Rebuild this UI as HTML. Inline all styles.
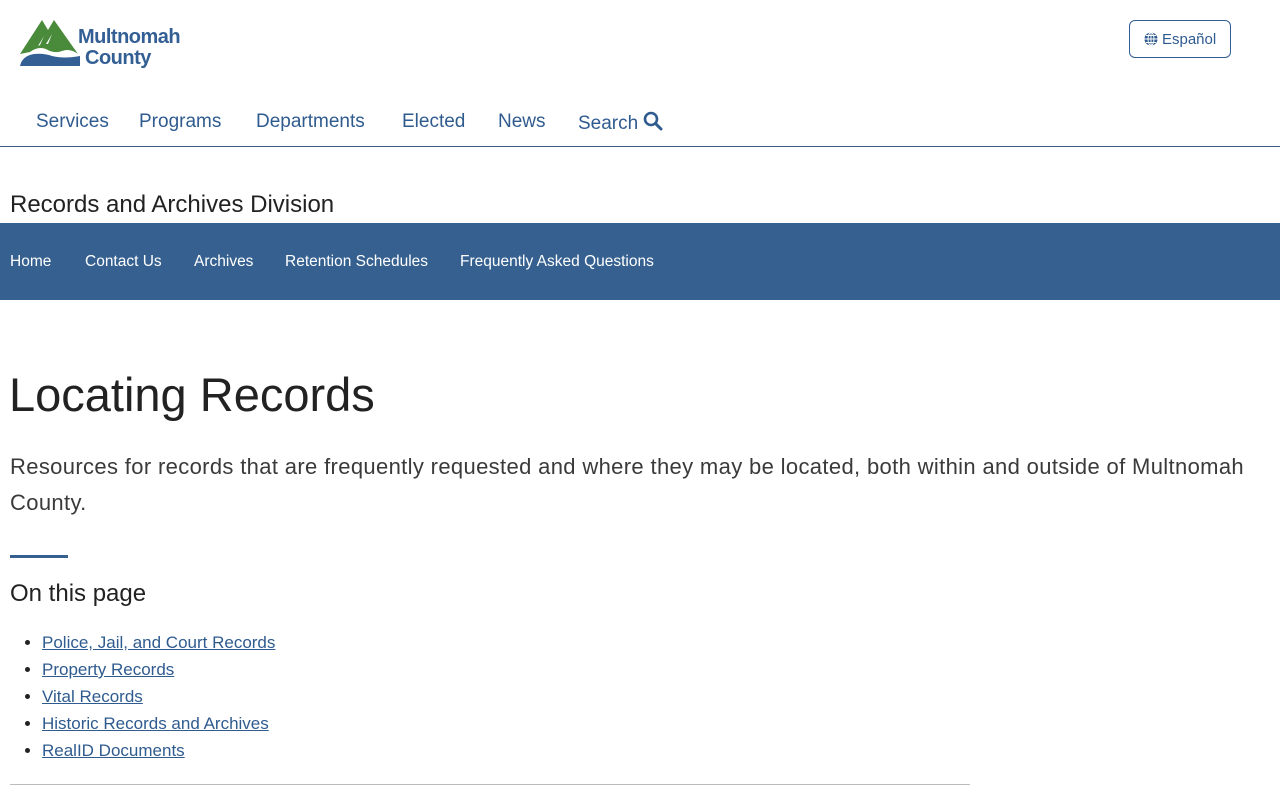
<!DOCTYPE html>
<html><head><meta charset="utf-8"><style>
body{margin:0;font-family:"Liberation Sans",sans-serif;color:#222;background:#fff;width:1280px;height:800px;overflow:hidden;position:relative}
.a{position:absolute;white-space:nowrap}
.nav span{position:absolute;top:111px;font-size:19px;color:#2f5b8f}
.sub span{position:absolute;top:253px;font-size:15.5px;color:#fff}
ul{position:absolute;left:10px;top:629px;margin:0;padding-left:32px;font-size:17px;line-height:27px}
li a{color:#2f5b8f;text-decoration:underline}
</style></head><body>
<svg class="a" style="left:18px;top:18px" width="70" height="52" viewBox="0 0 70 52">
<path d="M2 36 L24 2 L30 12 L36 2 L60 36 Q52 30 44 33 Q36 36 28 31 Q20 28 12 34 Z" fill="#4a8a3b"/>
<path d="M20 28 L26 18 L22 27 Z M28 26 L34 16 L30 26Z" fill="#fff"/>
<path d="M2 48 Q4 38 16 36 Q26 35 34 38 Q46 41 62 38 L62 48 Z" fill="#335f94"/>
</svg>
<div class="a" style="left:78px;top:27px;font-size:20px;font-weight:bold;color:#335f94;line-height:21px;letter-spacing:-0.5px">Multnomah<br><span style="margin-left:7px">County</span></div>
<div class="a" style="left:1129px;top:20px;width:100px;height:36px;border:1px solid #335f94;border-radius:6px;font-size:15px;color:#2f5b8f;line-height:38px;text-align:center">
<svg width="14" height="14" viewBox="0 0 14 14" style="vertical-align:-2px"><circle cx="7" cy="7" r="6.5" fill="#2f5b8f"/><path d="M0.5 7H13.5M7 .5V13.5M2 3.5H12M2 10.5H12" stroke="#fff" stroke-width="1"/><ellipse cx="7" cy="7" rx="3" ry="6.5" fill="none" stroke="#fff"/></svg> Español</div>
<div class="nav"><span style="left:36px">Services</span><span style="left:139px">Programs</span><span style="left:256px">Departments</span><span style="left:402px">Elected</span><span style="left:498px">News</span><span style="left:578px">Search <svg width="20" height="20" viewBox="0 0 20 20" style="vertical-align:-2px"><circle cx="8" cy="8" r="6" fill="none" stroke="#2f5b8f" stroke-width="2.6"/><path d="M12.5 12.5L18 18" stroke="#2f5b8f" stroke-width="3" stroke-linecap="round"/></svg></span></div>
<div class="a" style="left:0;top:146px;width:1280px;height:1px;background:#3d5a7a"></div>
<div class="a" style="left:10px;top:191px;font-size:24px">Records and Archives Division</div>
<div class="a" style="left:0;top:223px;width:1280px;height:77px;background:#35608f"></div>
<div class="sub"><span style="left:10px">Home</span><span style="left:85px">Contact Us</span><span style="left:194px">Archives</span><span style="left:285px">Retention Schedules</span><span style="left:460px">Frequently Asked Questions</span></div>
<div class="a" style="left:9px;top:367px;font-size:47px">Locating Records</div>
<div class="a" style="left:10px;top:449px;font-size:22px;line-height:36px;color:#3a3a3a;letter-spacing:0.35px;white-space:normal;width:1260px">Resources for records that are frequently requested and where they may be located, both within and outside of Multnomah County.</div>
<div class="a" style="left:10px;top:555px;width:58px;height:3px;background:#35608f"></div>
<div class="a" style="left:10px;top:580px;font-size:24px">On this page</div>
<ul><li><a>Police, Jail, and Court Records</a></li><li><a>Property Records</a></li><li><a>Vital Records</a></li><li><a>Historic Records and Archives</a></li><li><a>RealID Documents</a></li></ul>
<div class="a" style="left:10px;top:784px;width:960px;height:1px;background:#bbb"></div>
</body></html>
